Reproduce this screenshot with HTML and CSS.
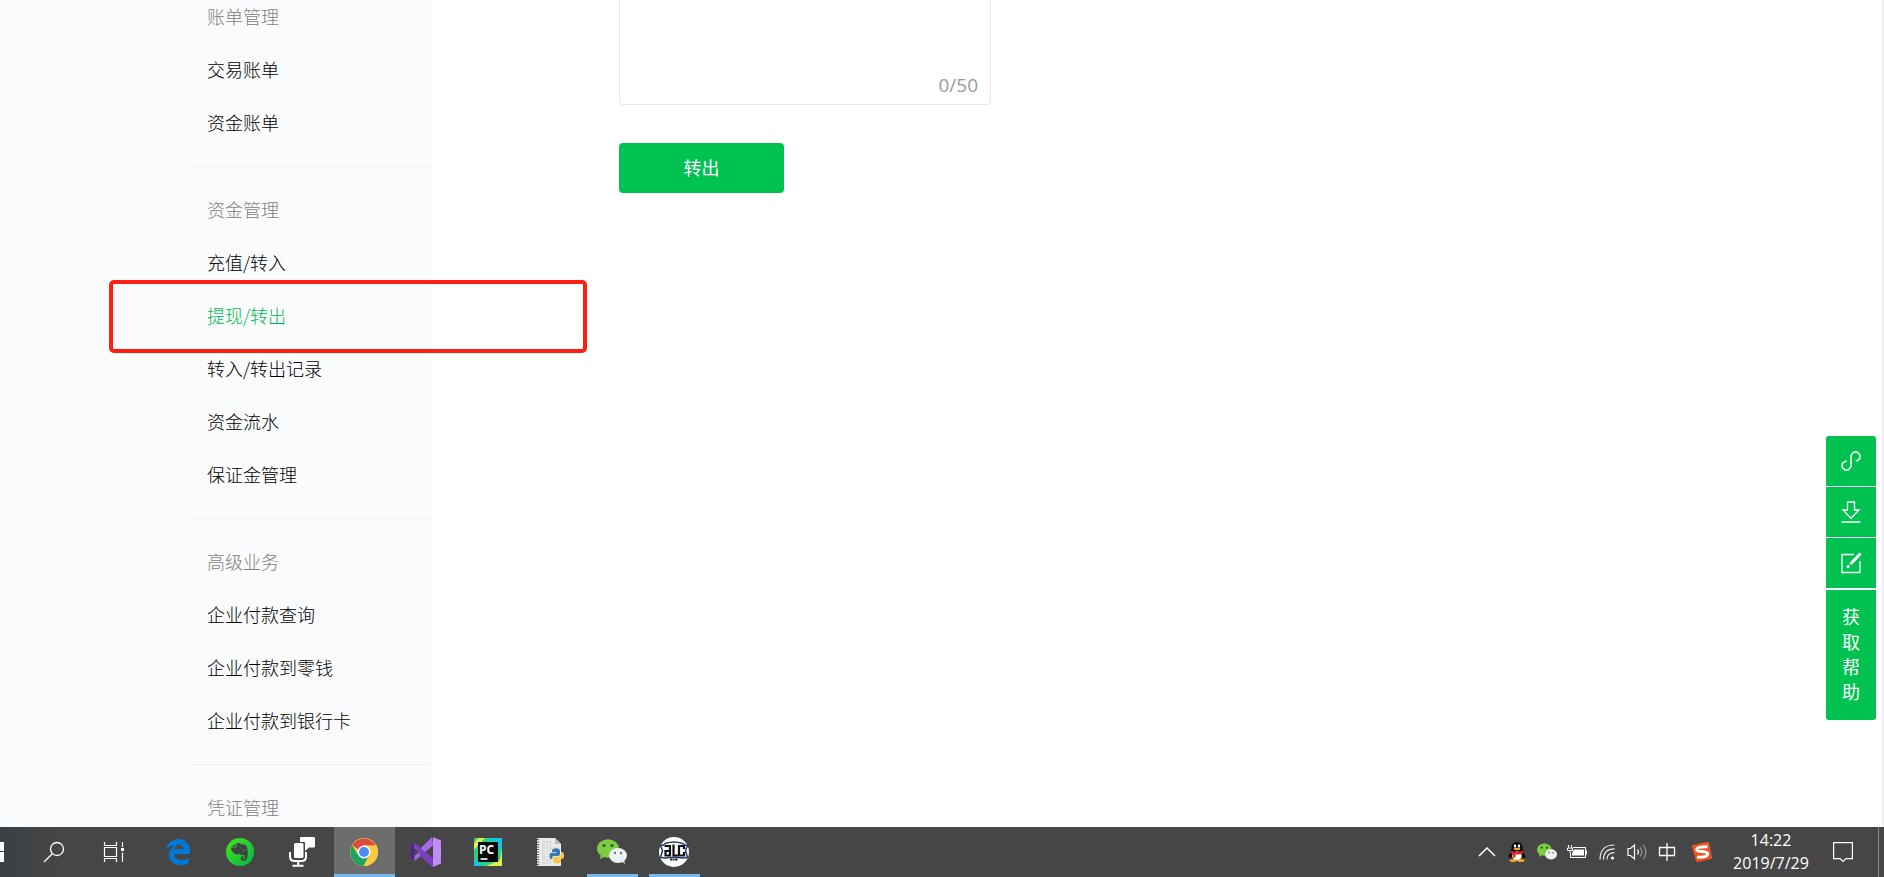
FILE: index.html
```html
<!DOCTYPE html>
<html lang="zh-CN">
<head>
<meta charset="utf-8">
<title>提现/转出</title>
<link rel="stylesheet" href="styles.css">
</head>
<body>
<div class="page">
  <aside class="sidebar">
    <nav class="menu">
      <section class="group">
        <h2 class="group-title">账单管理</h2>
        <a class="item" href="#">交易账单</a>
        <a class="item" href="#">资金账单</a>
      </section>
      <section class="group">
        <h2 class="group-title">资金管理</h2>
        <a class="item" href="#">充值/转入</a>
        <a class="item active" href="#">提现/转出</a>
        <a class="item" href="#">转入/转出记录</a>
        <a class="item" href="#">资金流水</a>
        <a class="item" href="#">保证金管理</a>
      </section>
      <section class="group">
        <h2 class="group-title">高级业务</h2>
        <a class="item" href="#">企业付款查询</a>
        <a class="item" href="#">企业付款到零钱</a>
        <a class="item" href="#">企业付款到银行卡</a>
      </section>
      <section class="group">
        <h2 class="group-title">凭证管理</h2>
      </section>
    </nav>
  </aside>
  <main class="main">
    <form class="form">
      <div class="field">
        <textarea class="remark" aria-label="备注" maxlength="50"></textarea>
        <span class="counter">0/50</span>
      </div>
      <button class="submit" type="button">转出</button>
    </form>
  </main>
  <div class="scroll-edge"></div>
  <div class="highlight"></div>
  <div class="tools">
    <button class="tool first" type="button" aria-label="链接">
      <svg width="22" height="22" viewBox="0 0 22 22" fill="none" stroke="#fff" stroke-width="1.500"><path d="M6.800 11.200H5.500L2.200 13.500v4L5 20h3l3-3V5l3-3h3l2.800 2.500v4L17 10.800h-1.300" stroke-linejoin="round"/></svg>
    </button>
    <button class="tool" type="button" aria-label="下载">
      <svg width="22" height="22" viewBox="0 0 22 22" fill="none" stroke="#fff" stroke-width="1.300"><path d="M7.500 1h7v8h4.500L11 17.200 3 9h4.500zM1.500 21h19"/></svg>
    </button>
    <button class="tool" type="button" aria-label="编辑">
      <svg width="22" height="22" viewBox="0 0 22 22" fill="none" stroke="#fff" stroke-width="1.300"><path d="M14 2.500H2v18h18V9"/><path d="M20.500 1.500L10.500 12" stroke-width="3"/><path d="M7.200 15.500l2-2" stroke-width="2.500"/></svg>
    </button>
    <button class="help" type="button"><span>获</span><span>取</span><span>帮</span><span>助</span></button>
  </div>
</div>
<footer class="taskbar">
  <button class="start" type="button" aria-label="开始">
    <svg width="4" height="20" viewBox="0 0 4 20" fill="#fff"><path d="M0 0h4v9H0zM0 10h4v10H0z"/></svg>
  </button>
  <button class="sys" type="button" aria-label="搜索">
    <svg width="22" height="22" viewBox="0 0 22 22" fill="none" stroke="#fff" stroke-width="1.300"><circle cx="14" cy="8" r="6.500"/><path d="M9.300 12.700L1 21"/></svg>
  </button>
  <button class="sys" type="button" aria-label="任务视图">
    <svg width="22" height="20" viewBox="0 0 22 20" fill="none" stroke="#fff" stroke-width="1.200"><path d="M1.500 0v3.500h12V0M1.500 20v-3.500h12V20M1.500 5.500h12v9h-12zM19.500 0v5M19.500 10.500V20"/><path d="M18 6h3v3h-3z" fill="#fff" stroke="none"/></svg>
  </button>
  <div class="apps">
    <button class="app" type="button" aria-label="Edge">
      <svg width="26" height="28" viewBox="0 0 26 28"><path fill="#0078d7" d="M1 12C2 5 7 1 13.500 1 21 1 25 6.500 25 13v3H9c.3 4 3.500 6 7.500 6 2.500 0 5-.7 7-2v5.500C21.500 26.500 18.500 27 15.500 27 8.500 27 4 22.800 4 17c0-4 2-7.200 5.500-9.200C5.500 7.500 3 9.500 1 12zM9.500 11H18c0-3-1.500-4.500-4-4.500S10 8.200 9.500 11z"/></svg>
    </button>
    <button class="app" type="button" aria-label="Evernote">
      <svg width="28" height="28" viewBox="0 0 28 28"><defs><linearGradient id="ev" x1="0" y1="0" x2="1" y2="1"><stop offset="0" stop-color="#4be01c"/><stop offset="1" stop-color="#00b848"/></linearGradient></defs><circle cx="14" cy="14" r="14" fill="url(#ev)"/><path fill="#3d4540" d="M10.500 5q3.500-.3 5 1.200 3.500 0 4.800 1.300 1.700 3.500 1.500 8.500-.2 4.500-1.600 6.200-2.200 1.400-4.500.3-1.600-1.200-.8-3 1-1.600 3.300-1l-.2 1.300q-1.500-.2-1.500.8.500.8 1.800.3 1-1 .5-2.800-.8-1.300-2.600-1.100-2-.1-2.200-1.600-1.500 1.700-3.800.8-3.600-1-4.700-4.200-.8-2.500 0-2.500h3.500q1.500 0 1.500-1.500zM9.300 5.500v3.200H6z"/><path fill="#29cc35" d="M17 12.300q1.200-1.700 2.500.2z"/></svg>
    </button>
    <button class="app" type="button" aria-label="语音">
      <svg width="26" height="30" viewBox="0 0 26 30" fill="#fff"><path d="M12 0h13q1 0 1 1v8.500q0 1-1 1h-5L16 14v-3.500V6q0-1-1-1h-4V1q0-1 1-1z"/><rect x="5" y="6" width="9.500" height="15" rx="1.500"/><path d="M1 15v4.500Q1 24 5.500 24h7q4.500 0 4.500-4.500V15M9.200 24v4.500M3.500 28.700h11" fill="none" stroke="#fff" stroke-width="2"/></svg>
    </button>
    <button class="app current" type="button" aria-label="Chrome">
      <svg width="28" height="28" viewBox="0 0 28 28"><circle cx="14" cy="14" r="14" fill="#fdc941"/><path fill="#dc4b3e" d="M2 7A14 14 0 0 1 26 7.500H14v8z"/><path fill="#1da261" d="M2 7a14 14 0 0 0 11.500 21L20 17l-12 0z"/><path fill="#fdc941" d="M14 7.500h12.400A14 14 0 0 1 13.500 28L20 16z"/><circle cx="14" cy="14" r="6.500" fill="#fff"/><circle cx="14" cy="14" r="5" fill="#4a8af4"/></svg>
    </button>
    <button class="app" type="button" aria-label="Visual Studio">
      <svg width="30" height="30" viewBox="0 0 30 30"><path fill="#8a50cf" d="M3.500 6L22 21.500V30L0 9z"/><path fill="#a56be6" d="M21 0l1 8.500L3.500 24 0 21z"/><path fill="#7a3fbd" d="M3.500 6L22 21.500V30l-1-.5L9 18.500z"/><path fill="#52218a" d="M0 8.500L3.500 6v18L0 21.500z"/><path fill="#464646" d="M3.500 11v8L8 15z"/><path fill="#bd8cf5" d="M22 0l8 3.500v23L22 30z"/></svg>
    </button>
    <button class="app" type="button" aria-label="PyCharm">
      <svg width="28" height="28" viewBox="0 0 28 28"><path fill="#23d18b" d="M0 0h28v28H0z"/><path fill="#14c3e8" d="M12 0h16v14l-6-10zM0 20l8 8H0z"/><path fill="#e7ee45" d="M28 11v17H12l14-6zM4 0h7L0 12V6z"/><path fill="#08090a" d="M4 4h20v20H4z"/><path stroke="#fff" stroke-width="1.600" d="M6.500 21h7"/><text x="5" y="15.500" class="pc-mark">PC</text></svg>
    </button>
    <button class="app" type="button" aria-label="Python">
      <svg width="28" height="29" viewBox="0 0 28 29"><path fill="#e9e9e9" d="M1 0h18l6 6v22H1z"/><path fill="#bdbdbd" d="M19 0l6 6h-6z"/><path stroke="#555" stroke-width="2" stroke-dasharray="1 1.500" d="M2 1v27"/><path stroke="#cacaca" stroke-width="1" stroke-dasharray="3 1 2 1" d="M6 4h11M6 7h9M6 10h16M6 13h8M6 16h7M6 19h7M6 22h9M6 25h9"/><path fill="#3a78b5" d="M17 11q3-1.500 6 0 1 .6 1 2v3q0 2-2 2h-4q-2 0-2 3h-1.500Q13 19 13.500 16.500q.4-1.700 2-1.700H20V14h-4v-1.500q0-1 1-1.500z"/><path fill="#fcc73f" d="M25 14h1.500q2 1.500 1.500 5-.4 2-2 2h-4.500v.8H25v1.500q0 1.500-2 2-3 .6-5-.5-1-.8-1-2v-2q0-2 2-2h4q2 0 2-2.500z"/></svg>
    </button>
    <button class="app running" type="button" aria-label="微信">
      <svg width="30" height="26" viewBox="0 0 30 26"><ellipse cx="11" cy="9.500" rx="11" ry="9.300" fill="#7dcc45"/><path fill="#7dcc45" d="M4 15l-1 5 5-2.500z"/><circle cx="7" cy="6.500" r="1.600" fill="#265c12"/><circle cx="15" cy="6.500" r="1.600" fill="#265c12"/><ellipse cx="21" cy="16.500" rx="9" ry="7.600" fill="#eef1f3"/><path fill="#e4e7ea" d="M24 22l4 3-1-5z"/><circle cx="18" cy="14" r="1.200" fill="#6d7478"/><circle cx="24" cy="14" r="1.200" fill="#6d7478"/></svg>
    </button>
    <button class="app running" type="button" aria-label="ALC">
      <svg width="30" height="30" viewBox="0 0 30 30"><circle cx="15" cy="15" r="15" fill="#fff"/><path fill="#fff" stroke="#26386e" stroke-width="1.500" d="M1.500 8.500q3 0 5-2 8.500-3 17 0 2 2 5 2l-2 5 2 7-5 .5q-8.500-1.500-17 0l-5-.5 2-7z"/><path fill="none" stroke="#111" stroke-width="2.200" d="M5.500 9H11v10.500M11 14H6.500v4.500H11M14.500 7.500v11h4.500M25 12V9h-5v9.500h5V15"/><path stroke="#222" stroke-width="2" stroke-dasharray="2 .5" d="M11 22.500h8"/></svg>
    </button>
  </div>
  <div class="tray">
    <button class="tray-icon" type="button" aria-label="显示隐藏的图标">
      <svg width="18" height="10" viewBox="0 0 18 10" fill="none" stroke="#fff" stroke-width="1.500"><path d="M1 9l8-8 8 8"/></svg>
    </button>
    <button class="tray-icon" type="button" aria-label="QQ">
      <svg width="18" height="20" viewBox="0 0 18 20"><ellipse cx="9" cy="11.500" rx="7" ry="7" fill="#0a0a0a"/><path fill="#0a0a0a" d="M3.500 9V6q0-6 5.500-6t5.500 6v3l3 5-1 2.500-3-3h-9l-3 3-1-2.500z"/><ellipse cx="9" cy="14" rx="4.800" ry="4.500" fill="#fff"/><ellipse cx="7" cy="4" rx="1.200" ry="1.700" fill="#fff"/><ellipse cx="11" cy="4" rx="1.200" ry="1.700" fill="#fff"/><ellipse cx="9" cy="7" rx="3.300" ry="1.200" fill="#f7a51b"/><path fill="#e3262c" d="M2.500 8.500q6.500 3 13 0v2.500q-4 2-8 1.500v3H5V12l-2.500-1z"/><ellipse cx="5" cy="18.500" rx="3.500" ry="1.500" fill="#f7a51b"/><ellipse cx="13" cy="18.500" rx="3.500" ry="1.500" fill="#f7a51b"/></svg>
    </button>
    <button class="tray-icon" type="button" aria-label="微信">
      <svg width="20" height="18" viewBox="0 0 30 26"><ellipse cx="11" cy="9.500" rx="11" ry="9.300" fill="#7dcc45"/><path fill="#7dcc45" d="M4 15l-1 5 5-2.500z"/><circle cx="7" cy="6.500" r="1.600" fill="#265c12"/><circle cx="15" cy="6.500" r="1.600" fill="#265c12"/><ellipse cx="21" cy="16.500" rx="9" ry="7.600" fill="#eef1f3"/><circle cx="18" cy="14" r="1.200" fill="#6d7478"/><circle cx="24" cy="14" r="1.200" fill="#6d7478"/></svg>
    </button>
    <button class="tray-icon" type="button" aria-label="电池">
      <svg width="20" height="14" viewBox="0 0 20 14" fill="none" stroke="#fff"><path d="M6 2.500h12.500v10h-15V8M1.500 0v2.500M4.500 0v2.500M.5 3h5v2.500h-5zM3 5.500V8"/><path fill="#fff" stroke="none" d="M7 4.500h10v6H5V8zM19 5.500h1v4h-1z"/></svg>
    </button>
    <button class="tray-icon" type="button" aria-label="网络">
      <svg width="16" height="16" viewBox="0 0 16 16" fill="none" stroke="#e8e8e8" stroke-width="1.200"><path d="M1 15.500Q1 1 15.500 1M4.500 15.500Q4.500 4.800 15.500 4.800M8 15.500Q8 8.600 15.500 8.600"/><circle cx="13.500" cy="14" r="1.600" fill="#fff" stroke="none"/></svg>
    </button>
    <button class="tray-icon" type="button" aria-label="音量">
      <svg width="20" height="18" viewBox="0 0 20 18" fill="none" stroke="#fff" stroke-width="1.200"><path d="M1 5.500h2.500L7.500 2v14L3.500 12.500H1zM10.500 6.500q2 2.500 0 5"/><path stroke="#999" d="M13 4.500q4 4.500 0 9M16 1.500q6 7.500 0 15"/></svg>
    </button>
    <button class="tray-icon" type="button" aria-label="中文输入">
      <svg width="18" height="20" viewBox="0 0 18 20" fill="none" stroke="#fff" stroke-width="1.300"><path d="M1.500 5.500h15v8h-15zM9 1v18"/></svg>
    </button>
    <button class="tray-icon sogou" type="button" aria-label="搜狗输入法">
      <svg width="20" height="20" viewBox="0 0 20 20"><path fill="#f0521e" d="M1.500 3L15 0q1.500-.2 2 1L20 15q.2 1.500-1 2L6 20q-1.500.2-2-1L0 5q-.2-1.700 1.500-2z"/><path fill="none" stroke="#fff" stroke-width="3" d="M15.500 4.700Q4.500 4.500 4.700 7.800c.3 2.700 11 .7 11 4Q15.500 15.500 5 15.300"/></svg>
    </button>
    <div class="clock"><time>14:22</time><time>2019/7/29</time></div>
    <button class="notice" type="button" aria-label="通知">
      <svg width="20" height="20" viewBox="0 0 20 20" fill="none" stroke="#fff" stroke-width="1.200"><path d="M.6.600h18.800v16H13L10 19.400 7 16.600H.6z"/></svg>
    </button>
    <div class="desktop-edge"></div>
  </div>
</footer>
</body>
</html>
```

FILE: styles.css
```css
* {
  box-sizing: border-box;
}

body {
  margin: 0;
  height: 100vh;
  display: flex;
  flex-direction: column;
  background: #fff;
  color: #353535;
  font-family: "Open Sans", "Noto Sans CJK SC", sans-serif;
  font-size: 18px;
}

button {
  border: 0;
  padding: 0;
  background: none;
  color: #fff;
  font: inherit;
}

svg {
  display: block;
}

.page {
  position: relative;
  flex: 1;
  min-height: 0;
  display: flex;
  overflow: hidden;
}

.sidebar {
  flex: 0 0 431px;
  padding-left: 191px;
  background: #fafbfd;
}

/* The menu is scrolled past its first divider. */
.menu {
  margin-top: -27px;
  font-family: "Noto Sans CJK SC", sans-serif;
  font-weight: 300;
}

.group {
  padding: 16px 0 17px 16px;
  border-top: 1px solid #eef0f2;
}

.group-title,
.item {
  display: block;
  margin: 0;
  font-size: 18px;
  font-weight: inherit;
  line-height: 53px;
}

.group-title {
  color: #808080;
}

.item {
  color: #000;
  text-decoration: none;
}

.item.active {
  color: #00b84c;
}

.main {
  flex: 1;
  padding-left: 188px;
}

.form {
  display: flex;
  flex-direction: column;
  align-items: flex-start;
  gap: 38px;
  margin-top: -20px;
}

.field {
  position: relative;
  width: 372px;
}

.remark {
  display: block;
  width: 100%;
  height: 125px;
  padding: 12px;
  border: 1px solid #e7e7eb;
  border-radius: 4px;
  font: inherit;
  resize: none;
}

.counter {
  position: absolute;
  right: 13px;
  bottom: 7px;
  color: #9a9a9a;
  font-size: 19px;
  line-height: 25px;
}

.submit {
  width: 165px;
  height: 50px;
  padding-bottom: 2px;
  border-radius: 4px;
  background: #00c250;
}

.scroll-edge {
  flex: 0 0 2px;
  background: #f1f1f1;
}

.highlight {
  position: absolute;
  left: 109px;
  top: 280px;
  width: 478px;
  height: 73px;
  border: 4px solid #ff1e12;
  border-radius: 5px;
}

.tools {
  position: absolute;
  right: 8px;
  top: 436px;
  width: 50px;
  display: flex;
  flex-direction: column;
  gap: 1px;
}

.tool {
  height: 50px;
  display: grid;
  place-items: center;
  background: #00c250;
}

.tool.first {
  border-radius: 3px 3px 0 0;
}

.help {
  display: flex;
  flex-direction: column;
  align-items: center;
  margin-top: 1px;
  padding: 15px 0;
  border-radius: 0 0 3px 3px;
  background: #00c250;
  line-height: 25px;
}

.taskbar {
  flex: 0 0 50px;
  display: flex;
  background: linear-gradient(90deg, #394045, #464646 60px);
}

.start {
  width: 24px;
  display: flex;
  align-items: center;
}

.sys {
  width: 60px;
  display: grid;
  place-items: center;
}

.apps {
  display: flex;
  gap: 1px;
  margin-left: 4px;
}

.app {
  position: relative;
  width: 61px;
  padding-right: 2px;
  display: grid;
  place-items: center;
}

.app.current {
  background: #6d6d6d;
}

.app.current::after,
.app.running::after {
  content: "";
  position: absolute;
  left: 0;
  right: 0;
  bottom: 0;
  height: 3px;
  background: #76b9ed;
}

.app.running::after {
  left: 5px;
  right: 5px;
}

.pc-mark {
  fill: #fff;
  font: 700 12px "Open Sans", sans-serif;
}

.tray {
  display: flex;
  margin-left: auto;
}

.tray-icon {
  width: 30px;
  display: grid;
  place-items: center;
}

.sogou {
  margin-left: 5px;
}

.clock {
  width: 90px;
  margin: 0 2px 0 9px;
  padding-top: 2px;
  display: flex;
  flex-direction: column;
  align-items: center;
  color: #fff;
  font-size: 16px;
  line-height: 23px;
}

.notice {
  width: 50px;
  display: grid;
  place-items: center;
}

.desktop-edge {
  width: 6px;
  margin-left: 10px;
  border-left: 1px solid #8a8a8a;
}
```
